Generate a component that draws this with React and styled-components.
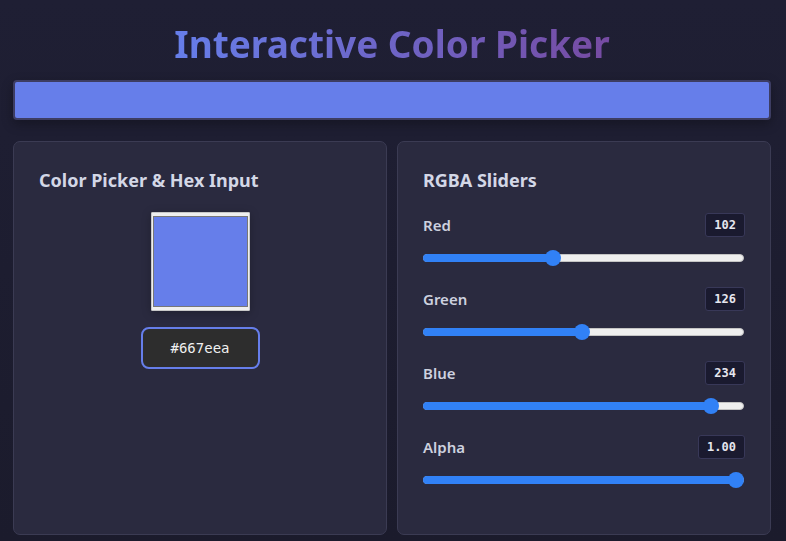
import styled, { createGlobalStyle } from "styled-components";

const GlobalStyle = createGlobalStyle`
  html, body {
    margin: 0;
    padding: 0;
  }
  body {
    background: linear-gradient(180deg, #1f1f34 0%, #1b1b2c 100%);
    min-height: 541px;
    font-family: "Noto Sans", "Open Sans", sans-serif;
  }
`;

const channels = [
  { name: "Red", value: 102, max: 255, text: "102" },
  { name: "Green", value: 126, max: 255, text: "126" },
  { name: "Blue", value: 234, max: 255, text: "234" },
  { name: "Alpha", value: 1, max: 1, text: "1.00" },
];

const App = () => {
  return (
    <Page>
      <GlobalStyle />
      <Title>Interactive Color Picker</Title>
      <Preview />
      <Grid>
        <Panel>
          <PanelTitle>Color Picker &amp; Hex Input</PanelTitle>
          <PickerColumn>
            <Swatch>
              <SwatchInner />
            </Swatch>
            <HexInput>#667eea</HexInput>
          </PickerColumn>
        </Panel>
        <Panel>
          <PanelTitle>RGBA Sliders</PanelTitle>
          {channels.map((ch) => {
            const pct = ch.value / ch.max;
            return (
              <SliderGroup key={ch.name}>
                <SliderHead>
                  <Label>{ch.name}</Label>
                  <Value>{ch.text}</Value>
                </SliderHead>
                <Track>
                  <Fill style={{ width: `calc(7px + (100% - 14px) * ${pct})` }} />
                  <Thumb style={{ left: `calc((100% - 14px) * ${pct} - 1px)` }} />
                </Track>
              </SliderGroup>
            );
          })}
        </Panel>
      </Grid>
    </Page>
  );
};

export default App;

const Page = styled.div`
  padding: 0 15px 0 13px;
  box-sizing: border-box;
  width: 786px;
`;

const Title = styled.h1`
  padding: 22px 0 13px;
  text-align: center;
  font-size: 37px;
  line-height: 44px;
  font-weight: 700;
  background: linear-gradient(90deg, #667eea 0%, #764ba2 100%);
  -webkit-background-clip: text;
  background-clip: text;
  color: transparent;
  width: fit-content;
  margin: 0 auto;
`;

const Preview = styled.div`
  height: 36px;
  background: #667eea;
  border: 2px solid #3d3d62;
  border-radius: 4px;
  box-shadow: 0 4px 12px rgba(0, 0, 0, 0.3);
  margin-top: 1px;
`;

const Grid = styled.div`
  display: grid;
  grid-template-columns: 374px 374px;
  gap: 10px;
  margin-top: 21px;
`;

const Panel = styled.div`
  background: #2a2a3f;
  border: 1px solid #3b3b53;
  border-radius: 7px;
  padding: 26px 25px 25px;
  box-sizing: border-box;
  height: 394px;
`;

const PanelTitle = styled.h2`
  margin: 0 0 21px;
  font-size: 18px;
  line-height: 24px;
  font-weight: 700;
  color: #d3d7e6;
`;

const PickerColumn = styled.div`
  display: flex;
  flex-direction: column;
  align-items: center;
  gap: 16px;
  margin-top: -1px;
`;

const Swatch = styled.div`
  width: 99px;
  height: 99px;
  box-sizing: border-box;
  background: #efefef;
  border: 1px solid #c8c8c8;
  padding: 3px 1px;
  border-radius: 1px;
  box-shadow: 0 2px 10px rgba(0, 0, 0, 0.25);
`;

const SwatchInner = styled.div`
  width: 100%;
  height: 100%;
  box-sizing: border-box;
  background: #667eea;
  border: 1px solid #777;
`;

const HexInput = styled.div`
  width: 119px;
  height: 42px;
  box-sizing: border-box;
  display: flex;
  align-items: center;
  justify-content: center;
  background: #2d2d2d;
  border: 2px solid #667eea;
  border-radius: 8px;
  color: #f0f0f0;
  font-family: "DejaVu Sans Mono", "Liberation Mono", monospace;
  font-size: 14px;
`;

const SliderGroup = styled.div`
  margin-bottom: 25px;
`;

const SliderHead = styled.div`
  display: flex;
  justify-content: space-between;
  align-items: center;
  height: 24px;
`;

const Label = styled.span`
  font-size: 15px;
  font-weight: 600;
  color: #cdd1df;
`;

const Value = styled.span`
  box-sizing: border-box;
  height: 24px;
  padding: 0 8px;
  display: flex;
  align-items: center;
  background: #1a1a2f;
  border: 1px solid #383858;
  border-radius: 3px;
  color: #e6e6ee;
  font-family: "DejaVu Sans Mono", "Liberation Mono", monospace;
  font-size: 12px;
  font-weight: 700;
`;

const Track = styled.div`
  position: relative;
  height: 8px;
  margin: 17px 1px 0 0;
  background: #efefef;
  border: 1px solid #c4c4c4;
  border-radius: 4px;
  box-sizing: border-box;
`;

const Fill = styled.div`
  position: absolute;
  left: -1px;
  top: -1px;
  bottom: -1px;
  background: #3181f6;
  border-radius: 4px;
`;

const Thumb = styled.div`
  position: absolute;
  top: 50%;
  width: 16px;
  height: 16px;
  margin-top: -8px;
  border-radius: 50%;
  background: #3181f6;
`;
